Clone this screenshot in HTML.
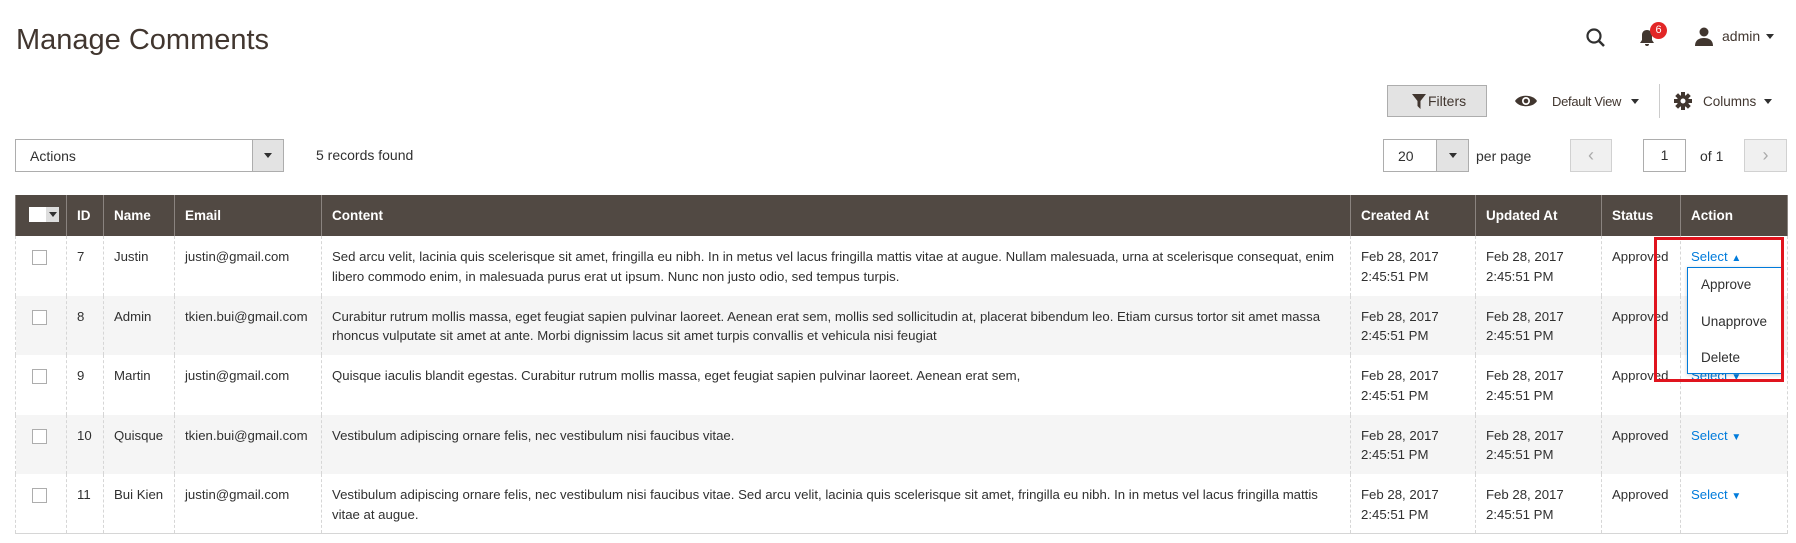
<!DOCTYPE html>
<html><head><meta charset="utf-8"><style>
*{box-sizing:border-box;margin:0;padding:0}
body{width:1796px;height:543px;background:#fff;font-family:"Liberation Sans",sans-serif;color:#303030;position:relative;overflow:hidden;font-size:13.5px}
.a{position:absolute}
h1{position:absolute;left:16px;top:24px;font-size:29px;font-weight:normal;color:#41362f}
.btn{border:1px solid #adadad;background:#e3e3e3}
table{position:absolute;left:15px;top:195px;width:1772px;border-collapse:collapse;table-layout:fixed}
th{background:#514943;color:#fff;font-weight:bold;text-align:left;height:41px;padding:0 10px;font-size:13.5px;border-left:1px solid #8a837f;border-right:1px solid #8a837f}
td{vertical-align:top;padding:11px 10px 0;height:59.5px;line-height:19.5px;border-left:1px dashed #d6d6d6;border-right:1px dashed #d6d6d6;white-space:nowrap;font-size:13.2px}
tbody tr:nth-child(even) td{background:#f5f5f5}
tbody tr:last-child td{border-bottom:1px solid #d6d6d6}
.cb{display:inline-block;width:15px;height:15px;border:1px solid #adadad;background:#fff;margin:3px 0 0 6px}
.sel{color:#007bdb}
.tri{display:inline-block;width:0;height:0;border-left:4px solid transparent;border-right:4px solid transparent;border-top:5px solid #303030;vertical-align:middle}
</style></head><body>
<h1>Manage Comments</h1>
<svg class="a" style="left:1585px;top:27px" width="22" height="22" viewBox="0 0 22 22"><circle cx="9" cy="9" r="6.5" fill="none" stroke="#303030" stroke-width="2.2"/><line x1="13.5" y1="13.5" x2="19" y2="19" stroke="#303030" stroke-width="2.5"/></svg>
<svg class="a" style="left:1638px;top:28px" width="18" height="20" viewBox="0 0 18 20"><path d="M9 2c-3 0-5 2-5 5v5l-2 3h14l-2-3V7c0-3-2-5-5-5z M7 16a2 2 0 0 0 4 0z" fill="#41362f"/></svg>
<div class="a" style="left:1650px;top:22px;width:17px;height:17px;border-radius:50%;background:#e22626;color:#fff;font-size:11px;text-align:center;line-height:17px">6</div>
<svg class="a" style="left:1694px;top:26px" width="20" height="20" viewBox="0 0 20 20"><circle cx="10" cy="6" r="4.5" fill="#41362f"/><path d="M1 20c0-6 4-8 9-8s9 2 9 8z" fill="#41362f"/></svg>
<div class="a" style="left:1722px;top:28px;font-size:14px;color:#41362f">admin</div>
<div class="a" style="left:1766px;top:34px"><span class="tri" style="display:block"></span></div>

<div class="a btn" style="left:1387px;top:85px;width:100px;height:32px"></div>
<svg class="a" style="left:1412px;top:94px" width="14" height="15" viewBox="0 0 14 15"><path d="M0 0h14L8.5 7v8L5.5 12V7z" fill="#41362f"/></svg>
<div class="a" style="left:1428px;top:93px;font-size:14px;color:#41362f">Filters</div>
<svg class="a" style="left:1514px;top:94px" width="24" height="14" viewBox="0 0 24 14"><path d="M1 7C5 0 19 0 23 7C19 14 5 14 1 7z" fill="#41362f"/><circle cx="12" cy="7" r="4" fill="#fff"/><circle cx="12" cy="7" r="2.3" fill="#41362f"/></svg>
<div class="a" style="left:1552px;top:94px;font-size:13px;color:#41362f;letter-spacing:-0.3px">Default View</div>
<div class="a" style="left:1631px;top:99px"><span class="tri" style="display:block"></span></div>
<div class="a" style="left:1659px;top:84px;width:1px;height:34px;background:#ccc"></div>
<svg class="a" style="left:1674px;top:92px" width="18" height="18" viewBox="0 0 18 18"><g fill="#41362f"><circle cx="9" cy="9" r="6"/><rect x="7" y="0" width="4" height="18"/><rect x="0" y="7" width="18" height="4"/><rect x="7" y="0" width="4" height="18" transform="rotate(45 9 9)"/><rect x="7" y="0" width="4" height="18" transform="rotate(-45 9 9)"/></g><circle cx="9" cy="9" r="2.5" fill="#fff"/></svg>
<div class="a" style="left:1703px;top:94px;font-size:13.5px;color:#41362f">Columns</div>
<div class="a" style="left:1764px;top:99px"><span class="tri" style="display:block"></span></div>

<div class="a" style="left:15px;top:139px;width:269px;height:33px;border:1px solid #adadad;background:#fff"></div>
<div class="a" style="left:252px;top:139px;width:32px;height:33px;border:1px solid #adadad;background:#e3e3e3"></div>
<div class="a" style="left:264px;top:153px"><span class="tri" style="display:block"></span></div>
<div class="a" style="left:30px;top:148px;font-size:14px">Actions</div>
<div class="a" style="left:316px;top:147px;font-size:14px">5 records found</div>

<div class="a" style="left:1383px;top:139px;width:86px;height:33px;border:1px solid #adadad;background:#fff"></div>
<div class="a" style="left:1436px;top:139px;width:33px;height:33px;border:1px solid #adadad;background:#e3e3e3"></div>
<div class="a" style="left:1449px;top:153px"><span class="tri" style="display:block"></span></div>
<div class="a" style="left:1398px;top:148px;font-size:14px">20</div>
<div class="a" style="left:1476px;top:148px;font-size:14px">per page</div>
<div class="a" style="left:1570px;top:139px;width:42px;height:33px;border:1px solid #d1d1d1;background:#f0f0f0;color:#aaa;text-align:center;line-height:31px;font-size:18px">‹</div>
<div class="a" style="left:1643px;top:139px;width:43px;height:33px;border:1px solid #adadad;background:#fff;text-align:center;line-height:31px;font-size:14px">1</div>
<div class="a" style="left:1700px;top:148px;font-size:14px">of 1</div>
<div class="a" style="left:1744px;top:139px;width:43px;height:33px;border:1px solid #d1d1d1;background:#f0f0f0;color:#aaa;text-align:center;line-height:31px;font-size:18px">›</div>

<table>
<colgroup><col style="width:51px"><col style="width:37px"><col style="width:71px"><col style="width:147px"><col style="width:1029px"><col style="width:125px"><col style="width:126px"><col style="width:79px"><col style="width:107px"></colgroup>
<thead><tr><th><span style="display:inline-block;width:30px;height:15px;background:#fff;position:relative;margin-left:3px"><span style="position:absolute;right:0;top:0;width:13px;height:15px;background:#ddd"></span><span class="tri" style="position:absolute;right:2px;top:5px"></span></span></th><th>ID</th><th>Name</th><th>Email</th><th>Content</th><th>Created At</th><th>Updated At</th><th>Status</th><th>Action</th></tr></thead>
<tbody>
<tr><td><span class="cb"></span></td><td>7</td><td>Justin</td><td>justin@gmail.com</td><td>Sed arcu velit, lacinia quis scelerisque sit amet, fringilla eu nibh. In in metus vel lacus fringilla mattis vitae at augue. Nullam malesuada, urna at scelerisque consequat, enim<br>libero commodo enim, in malesuada purus erat ut ipsum. Nunc non justo odio, sed tempus turpis.</td><td>Feb 28, 2017<br>2:45:51 PM</td><td>Feb 28, 2017<br>2:45:51 PM</td><td>Approved</td><td><span class="sel">Select <span style="font-size:10px">▲</span></span></td></tr>
<tr><td><span class="cb"></span></td><td>8</td><td>Admin</td><td>tkien.bui@gmail.com</td><td>Curabitur rutrum mollis massa, eget feugiat sapien pulvinar laoreet. Aenean erat sem, mollis sed sollicitudin at, placerat bibendum leo. Etiam cursus tortor sit amet massa<br>rhoncus vulputate sit amet at ante. Morbi dignissim lacus sit amet turpis convallis et vehicula nisi feugiat</td><td>Feb 28, 2017<br>2:45:51 PM</td><td>Feb 28, 2017<br>2:45:51 PM</td><td>Approved</td><td></td></tr>
<tr><td><span class="cb"></span></td><td>9</td><td>Martin</td><td>justin@gmail.com</td><td>Quisque iaculis blandit egestas. Curabitur rutrum mollis massa, eget feugiat sapien pulvinar laoreet. Aenean erat sem,</td><td>Feb 28, 2017<br>2:45:51 PM</td><td>Feb 28, 2017<br>2:45:51 PM</td><td>Approved</td><td><span class="sel">Select <span style="font-size:10px">▼</span></span></td></tr>
<tr><td><span class="cb"></span></td><td>10</td><td>Quisque</td><td>tkien.bui@gmail.com</td><td>Vestibulum adipiscing ornare felis, nec vestibulum nisi faucibus vitae.</td><td>Feb 28, 2017<br>2:45:51 PM</td><td>Feb 28, 2017<br>2:45:51 PM</td><td>Approved</td><td><span class="sel">Select <span style="font-size:10px">▼</span></span></td></tr>
<tr><td><span class="cb"></span></td><td>11</td><td>Bui Kien</td><td>justin@gmail.com</td><td>Vestibulum adipiscing ornare felis, nec vestibulum nisi faucibus vitae. Sed arcu velit, lacinia quis scelerisque sit amet, fringilla eu nibh. In in metus vel lacus fringilla mattis<br>vitae at augue.</td><td>Feb 28, 2017<br>2:45:51 PM</td><td>Feb 28, 2017<br>2:45:51 PM</td><td>Approved</td><td><span class="sel">Select <span style="font-size:10px">▼</span></span></td></tr>
</tbody></table>

<div class="a" style="left:1687px;top:267px;width:95px;height:107px;background:#fff;border:1px solid #007bdb;box-shadow:0 1px 4px rgba(0,0,0,.2);font-size:13.5px">
<div class="a" style="left:13px;top:9px">Approve</div>
<div class="a" style="left:13px;top:46px">Unapprove</div>
<div class="a" style="left:13px;top:82px">Delete</div>
</div>
<div class="a" style="left:1654px;top:237px;width:130px;height:145px;border:3px solid #e0141e"></div>
</body></html>
